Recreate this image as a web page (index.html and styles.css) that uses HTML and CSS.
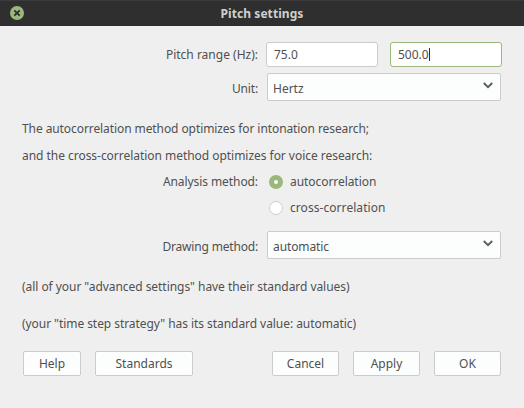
FILE: index.html
```html
<!DOCTYPE html>
<html lang="en">
<head>
<meta charset="utf-8">
<title>Pitch settings</title>
<link rel="stylesheet" href="styles.css">
</head>
<body>
<div class="dialog">
  <header class="titlebar">
    <svg class="close" width="14" height="14" viewBox="0 0 14 14"><circle cx="7" cy="7" r="7" fill="#9ab87c"/><path d="M4.3 4.3l5.4 5.4M9.7 4.3l-5.4 5.4" stroke="#2f2f2f" stroke-width="1.9"/></svg>
    <h1 class="title">Pitch settings</h1>
  </header>
  <form class="form">
    <div class="row range">
      <span class="label">Pitch range (Hz):</span>
      <div class="field">75.0</div>
      <div class="field focused">500.0<span class="caret"></span></div>
    </div>
    <div class="row choice">
      <span class="label unit">Unit:</span>
      <div class="select"><span>Hertz</span><svg class="arrow" width="10" height="7" viewBox="0 0 10 7"><path d="M.8 1L5 5.2 9.2 1" fill="none" stroke="#5c5c5c" stroke-width="1.9"/></svg></div>
    </div>
    <p class="note intro">The autocorrelation method optimizes for intonation research;</p>
    <p class="note contrast">and the cross-correlation method optimizes for voice research:</p>
    <div class="row method">
      <span class="label analysis">Analysis method:</span>
      <span class="radio checked"></span><span class="auto">autocorrelation</span>
    </div>
    <div class="row method">
      <span class="label"></span>
      <span class="radio"></span><span class="cross">cross-correlation</span>
    </div>
    <div class="row choice drawing">
      <span class="label">Drawing method:</span>
      <div class="select"><span>automatic</span><svg class="arrow" width="10" height="7" viewBox="0 0 10 7"><path d="M.8 1L5 5.2 9.2 1" fill="none" stroke="#5c5c5c" stroke-width="1.9"/></svg></div>
    </div>
    <p class="note advanced">(all of your "advanced settings" have their standard values)</p>
    <p class="note strategy">(your "time step strategy" has its standard value: automatic)</p>
    <div class="actions">
      <button type="button" class="btn help">Help</button>
      <button type="button" class="btn standards">Standards</button>
      <button type="button" class="btn">Cancel</button>
      <button type="button" class="btn">Apply</button>
      <button type="button" class="btn">OK</button>
    </div>
  </form>
</div>
</body>
</html>
```
FILE: styles.css
```css
* { box-sizing: border-box; }
body {
  margin: 0;
  background: #efefef;
  color: #505050;
  font: 12px/18px "Noto Sans", sans-serif;
}
.dialog { width: 524px; height: 408px; overflow: hidden; }
.titlebar {
  display: flex;
  align-items: center;
  height: 26px;
  padding: 0 10px;
  background: #2f2f2f;
  border-top: 1px solid #3a3a3a;
}
.close { flex: none; margin-top: -1px; }
.title {
  flex: 1;
  margin: 0 14px 0 0;
  text-align: center;
  font-size: 12px;
  line-height: 18px;
  font-weight: 700;
  letter-spacing: .06px;
  color: #cfcfcf;
}
.form { padding: 16px 22px 0; }
.row { display: flex; align-items: center; }
.label { width: 236px; flex: none; text-align: right; white-space: nowrap; }
.range { height: 25px; }
.field {
  display: flex;
  align-items: center;
  width: 112px;
  height: 25px;
  margin-left: 8px;
  padding-left: 7px;
  background: #fff;
  border: 1px solid #cbcbcb;
  border-radius: 3px;
}
.field + .field { margin-left: 12px; }
.focused { border-color: #9ab87c; }
.caret { width: 1px; height: 13px; background: #303030; }
.choice { height: 28px; margin-top: 6px; }
.choice .label { padding-top: 3px; }
.unit { letter-spacing: -.15px; }
.select {
  display: flex;
  align-items: center;
  justify-content: space-between;
  width: 234px;
  height: 28px;
  margin-left: 9px;
  padding: 0 7px 0 5px;
  background: #fcfefd;
  border: 1px solid #cbcbcb;
  border-radius: 2px;
}
.select span { padding-top: 3px; }
.arrow { margin-top: -3px; }
.note { margin: 0; height: 27px; line-height: 27px; white-space: nowrap; }
.intro { margin-top: 14px; letter-spacing: -.085px; }
.contrast { letter-spacing: -.035px; }
.method { height: 26px; }
.analysis { letter-spacing: -.08px; }
.auto { letter-spacing: -.06px; }
.cross { letter-spacing: .06px; }
.radio {
  width: 14px;
  height: 14px;
  margin: 0 7px 0 11px;
  background: #fff;
  border: 1px solid #cbcbcb;
  border-radius: 50%;
}
.checked { border: 5px solid #9ab87c; }
.drawing { margin-top: 10px; }
.drawing .label { letter-spacing: -.18px; }
.drawing .select span { letter-spacing: -.1px; }
.advanced { margin-top: 14px; letter-spacing: -.05px; }
.strategy { margin-top: 10px; letter-spacing: -.06px; }
.actions { display: flex; gap: 14px; margin: 14px 0 0 1px; }
.btn {
  width: 67px;
  height: 25px;
  padding: 0;
  font: inherit;
  color: inherit;
  background: #fcfefd;
  border: 1px solid #cbcbcb;
  border-radius: 2px;
}
.help { width: 58px; }
.standards { width: 98px; margin-right: 65px; }
```
